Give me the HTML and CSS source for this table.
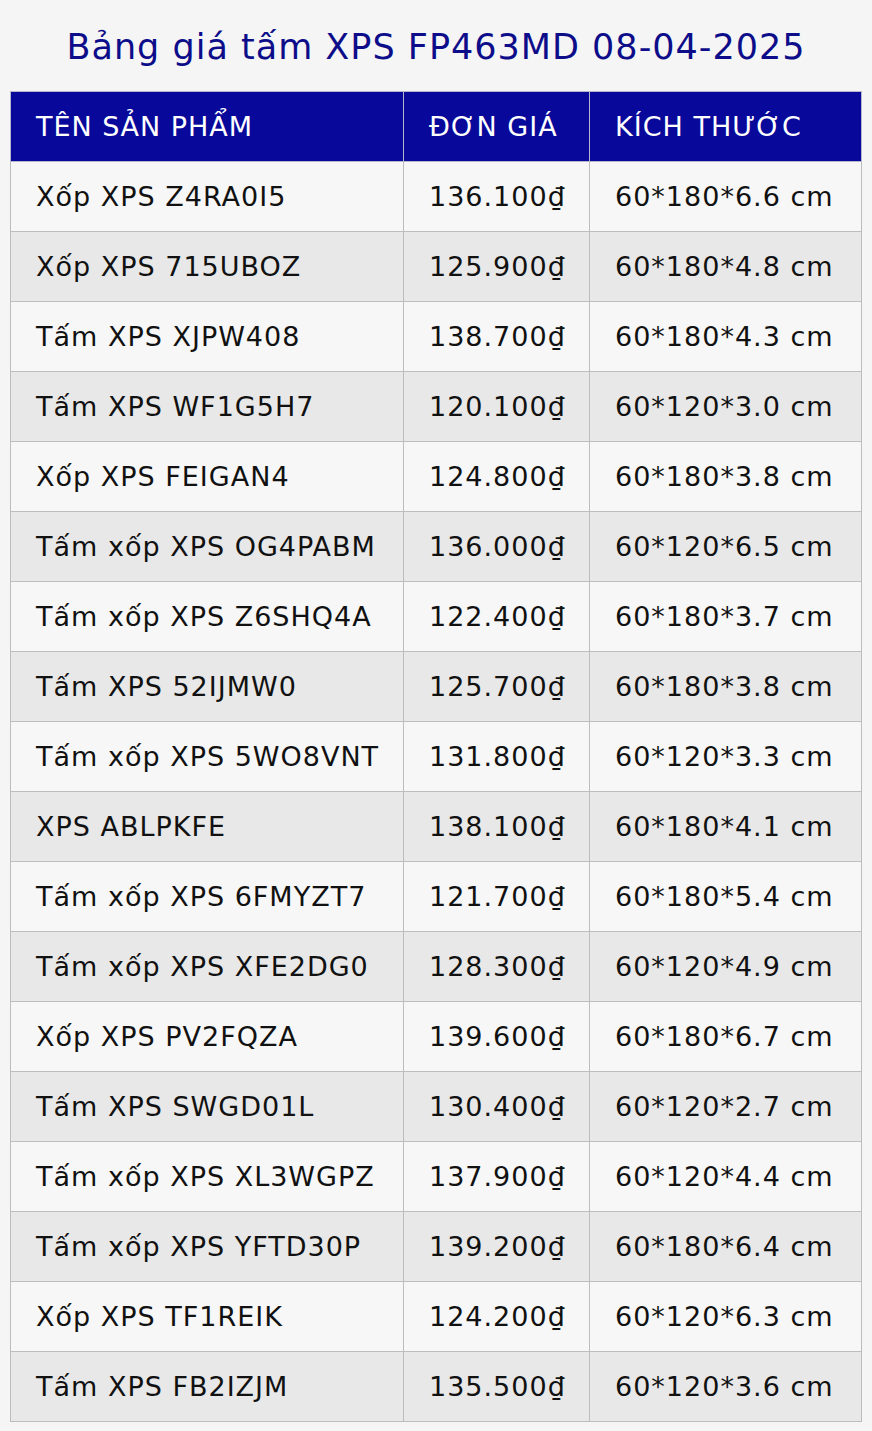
FILE: index.html
```html
<!DOCTYPE html>
<html lang="vi">
<head>
<meta charset="utf-8">
<title>Bảng giá tấm XPS FP463MD</title>
<link rel="stylesheet" href="styles.css">
</head>
<body>
<h1 class="title">Bảng giá tấm XPS FP463MD 08-04-2025</h1>
<table class="price-table">
  <colgroup>
    <col class="c-name"><col class="c-price"><col class="c-size">
  </colgroup>
  <thead>
    <tr><th>TÊN SẢN PHẨM</th><th>ĐƠN GIÁ</th><th>KÍCH THƯỚC</th></tr>
  </thead>
  <tbody>
    <tr><td>Xốp XPS Z4RA0I5</td><td>136.100₫</td><td>60*180*6.6 cm</td></tr>
    <tr><td>Xốp XPS 715UBOZ</td><td>125.900₫</td><td>60*180*4.8 cm</td></tr>
    <tr><td>Tấm XPS XJPW408</td><td>138.700₫</td><td>60*180*4.3 cm</td></tr>
    <tr><td>Tấm XPS WF1G5H7</td><td>120.100₫</td><td>60*120*3.0 cm</td></tr>
    <tr><td>Xốp XPS FEIGAN4</td><td>124.800₫</td><td>60*180*3.8 cm</td></tr>
    <tr><td>Tấm xốp XPS OG4PABM</td><td>136.000₫</td><td>60*120*6.5 cm</td></tr>
    <tr><td>Tấm xốp XPS Z6SHQ4A</td><td>122.400₫</td><td>60*180*3.7 cm</td></tr>
    <tr><td>Tấm XPS 52IJMW0</td><td>125.700₫</td><td>60*180*3.8 cm</td></tr>
    <tr><td>Tấm xốp XPS 5WO8VNT</td><td>131.800₫</td><td>60*120*3.3 cm</td></tr>
    <tr><td>XPS ABLPKFE</td><td>138.100₫</td><td>60*180*4.1 cm</td></tr>
    <tr><td>Tấm xốp XPS 6FMYZT7</td><td>121.700₫</td><td>60*180*5.4 cm</td></tr>
    <tr><td>Tấm xốp XPS XFE2DG0</td><td>128.300₫</td><td>60*120*4.9 cm</td></tr>
    <tr><td>Xốp XPS PV2FQZA</td><td>139.600₫</td><td>60*180*6.7 cm</td></tr>
    <tr><td>Tấm XPS SWGD01L</td><td>130.400₫</td><td>60*120*2.7 cm</td></tr>
    <tr><td>Tấm xốp XPS XL3WGPZ</td><td>137.900₫</td><td>60*120*4.4 cm</td></tr>
    <tr><td>Tấm xốp XPS YFTD30P</td><td>139.200₫</td><td>60*180*6.4 cm</td></tr>
    <tr><td>Xốp XPS TF1REIK</td><td>124.200₫</td><td>60*120*6.3 cm</td></tr>
    <tr><td>Tấm XPS FB2IZJM</td><td>135.500₫</td><td>60*120*3.6 cm</td></tr>
  </tbody>
</table>
</body>
</html>
```
FILE: styles.css
```css
html, body {
  margin: 0;
  padding: 0;
  background: #f5f5f5;
}
body {
  font-family: "DejaVu Sans", Verdana, sans-serif;
  padding: 0 10px 10px 10px;
}
.title {
  margin: 0;
  height: 93px;
  display: flex;
  align-items: center;
  justify-content: center;
  font-size: 35px;
  letter-spacing: 1px;
  font-weight: normal;
  color: #0d0d8a;
}
.price-table {
  width: 851px;
  margin-top: -2px;
  border-collapse: collapse;
  table-layout: fixed;
  font-size: 27px;
  letter-spacing: 1px;
}
.c-name { width: 393px; }
.c-price { width: 186px; }
.c-size { width: 272px; }
.price-table th,
.price-table td {
  height: 69px;
  padding: 0 0 0 25px;
  text-align: left;
  border: 1px solid #bdbdbd;
  white-space: nowrap;
}
.price-table th {
  background: #08089a;
  color: #ffffff;
  font-weight: normal;
  border-color: #b5b5cc;
}
.price-table td {
  color: #111111;
}
.price-table tbody tr:nth-child(odd) td { background: #f7f7f7; }
.price-table tbody tr:nth-child(even) td { background: #e8e8e8; }
```
